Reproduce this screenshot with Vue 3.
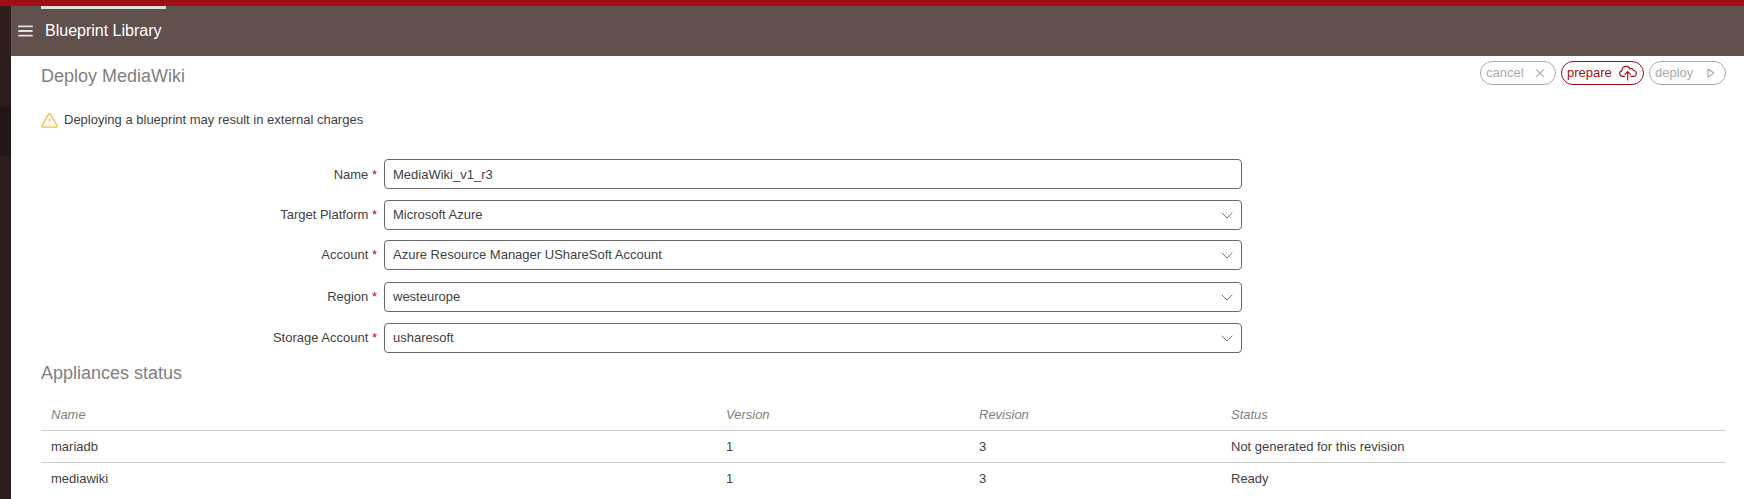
<script setup>
const fields = [
  { label: 'Name', value: 'MediaWiki_v1_r3', select: false },
  { label: 'Target Platform', value: 'Microsoft Azure', select: true },
  { label: 'Account', value: 'Azure Resource Manager UShareSoft Account', select: true },
  { label: 'Region', value: 'westeurope', select: true },
  { label: 'Storage Account', value: 'usharesoft', select: true },
]
const appliances = [
  { name: 'mariadb', version: 1, revision: 3, status: 'Not generated for this revision' },
  { name: 'mediawiki', version: 1, revision: 3, status: 'Ready' },
]
</script>

<template>
  <div class="page">
    <div class="topbar"></div>
    <div class="body">
      <aside class="side"><div class="side-active"></div></aside>
      <div class="main">
        <header class="header">
          <svg class="burger" width="15" height="12" viewBox="0 0 15 12">
            <path d="M1 1.4H14M1 6H14M1 10.6H14" stroke="#e4dfdd" stroke-width="1.9" stroke-linecap="round" />
          </svg>
          <div class="tab">Blueprint Library</div>
        </header>
        <div class="titlebar">
          <h1>Deploy MediaWiki</h1>
          <div class="actions">
            <button class="btn cancel">
              <span>cancel</span>
              <svg width="10" height="10" viewBox="0 0 10 10"><path d="M1.3 1.3L8.9 8.9M8.9 1.3L1.3 8.9" /></svg>
            </button>
            <button class="btn prepare">
              <span>prepare</span>
              <svg width="18" height="16" viewBox="0 0 18 16">
                <path d="M5.8 11.4H3.4C1.8 11 .7 10 .7 8.5C.7 6.9 1.8 6 2.9 5.9C2.7 3.1 4.5 1.4 7 1.4C9 1.4 10.3 2.4 10.9 3.9C12.5 3 14.2 4 14.4 5.5C16.1 5.6 17.3 6.7 17.3 8.2C17.3 10.1 16 11.4 14.2 11.4H11.5M8.7 15.4V6.8M5.6 9.7L8.7 6.6L11.8 9.7" />
              </svg>
            </button>
            <button class="btn deploy">
              <span>deploy</span>
              <svg width="8" height="10" viewBox="0 0 8 10"><path d="M1 1V9L7 5Z" stroke-linejoin="round" /></svg>
            </button>
          </div>
        </div>
        <div class="warning">
          <svg width="17" height="15" viewBox="0 0 17 15">
            <path d="M7.2 1.7Q8.5 -.2 9.8 1.7L15.8 12.2Q16.4 14 14.8 14.1H2.2Q.6 14 1.2 12.2Z" fill="none" stroke="#fbb840" stroke-width="1.4" />
            <path d="M8.5 5V9.6M8.5 10.7V12.3" stroke="#fcd28a" stroke-width="1.6" />
          </svg>
          <span>Deploying a blueprint may result in external charges</span>
        </div>
        <form class="form">
          <div v-for="f in fields" :key="f.label" class="field" :class="{ select: f.select }">
            <label>{{ f.label }} <i>*</i></label>
            <div class="control">
              <span>{{ f.value }}</span>
              <svg v-if="f.select" width="12" height="7" viewBox="0 0 12 7">
                <path d="M.7 .7L6 6L11.3 .7" fill="none" stroke="#777" stroke-width="1" />
              </svg>
            </div>
          </div>
        </form>
        <h2>Appliances status</h2>
        <div class="table">
          <div class="row head"><span>Name</span><span>Version</span><span>Revision</span><span>Status</span></div>
          <div v-for="a in appliances" :key="a.name" class="row">
            <span>{{ a.name }}</span><span>{{ a.version }}</span><span>{{ a.revision }}</span><span>{{ a.status }}</span>
          </div>
        </div>
      </div>
    </div>
  </div>
</template>

<style>
body { margin: 0; overflow: hidden; }
</style>

<style scoped>
.page { width: 1744px; height: 499px; overflow: hidden; background: #fff; color: #424242; font: 13px/15px "Liberation Sans", Arial, sans-serif; }
.topbar { height: 6px; background: #9c0f16; }
.body { display: flex; height: 493px; }
.side { width: 11px; flex: none; padding-top: 100px; box-sizing: border-box; background: #2d1e1c; }
.side-active { height: 50px; background: #231816; }
.main { flex: 1; min-width: 0; }
.header { display: flex; height: 50px; background: #5f504c; }
.burger { margin: 19px 0 0 6.5px; flex: none; }
.tab { margin-left: 8.5px; width: 125px; height: 50px; box-sizing: border-box; border-top: 3px solid #e2dfdf; padding: 13px 0 0 4px; color: #fff; font-size: 16px; line-height: 18px; white-space: nowrap; }
.titlebar { display: flex; justify-content: space-between; height: 52px; padding: 0 18px 0 30px; }
h1, h2 { margin: 0; font-size: 18px; line-height: 20px; font-weight: 400; color: #808080; }
h1 { padding-top: 10px; }
.actions { display: flex; gap: 5px; padding-top: 5px; }
.btn { display: flex; align-items: center; justify-content: space-between; height: 24px; box-sizing: border-box; margin: 0; padding: 0 5px; border: 1px solid #aaa; border-radius: 12px; background: #fff; color: #aaa; font: inherit; }
.btn span { padding-bottom: 2px; }
.btn svg { fill: none; stroke: currentColor; stroke-width: 1.1; }
.cancel { width: 76px; padding-right: 10px; }
.prepare { width: 83px; padding-right: 6px; color: #9c0f16; border-color: #9c0f16; }
.deploy { width: 77px; padding-right: 10px; }
.warning { display: flex; align-items: center; gap: 6px; height: 24px; padding-left: 30px; }
.warning span { padding-bottom: 2px; }
.form { display: grid; grid-template-rows: 41px 40px 42px 41px 30px; margin-top: 27px; }
.field { display: flex; height: 30px; }
.field label { width: 366px; line-height: 32px; text-align: right; white-space: nowrap; }
.field i { color: #d40000; font-style: normal; }
.control { display: flex; align-items: center; justify-content: space-between; width: 858px; height: 30px; box-sizing: border-box; margin-left: 7px; padding: 0 8px; border: 1px solid #696969; border-radius: 4px; }
.select label { line-height: 30px; }
.select span { padding-bottom: 2px; }
h2 { padding: 10px 0 0 30px; }
.table { margin: 16px 18px 0 30px; }
.row { display: grid; grid-template-columns: 675px 253px 252px 1fr; height: 32px; box-sizing: border-box; padding: 0 10px; line-height: 31px; border-bottom: 1px solid #ccc; }
.row:last-child { border-bottom: 0; }
.head { color: #808080; font-style: italic; }
</style>
